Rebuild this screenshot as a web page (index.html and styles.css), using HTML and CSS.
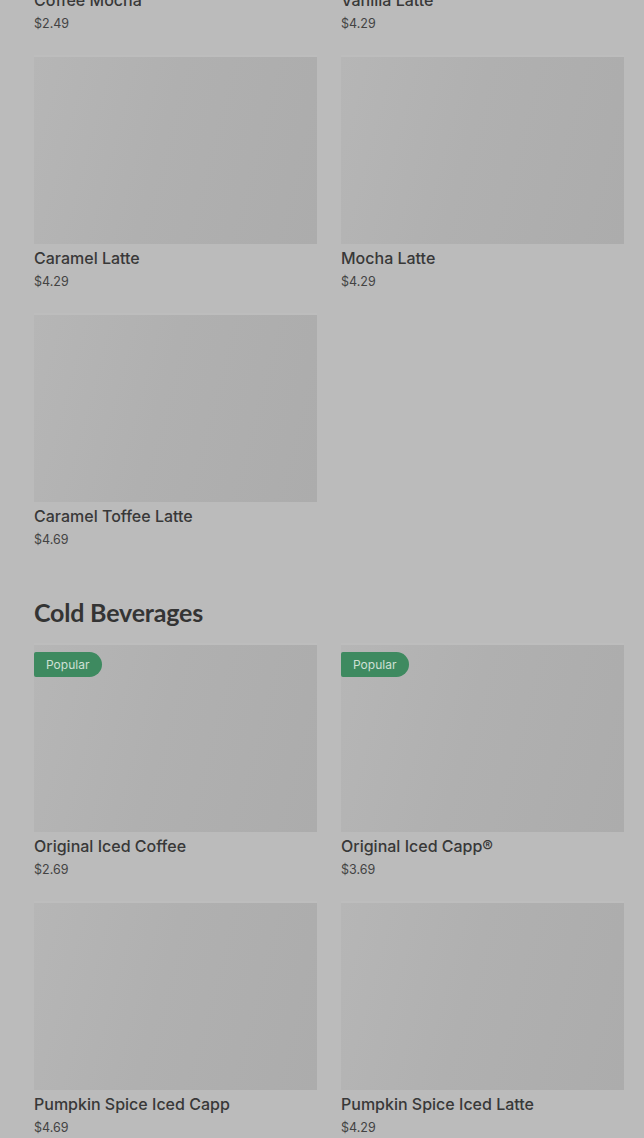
FILE: index.html
```html
<!DOCTYPE html>
<html lang="en">
<head>
<meta charset="utf-8">
<title>Menu</title>
<link rel="stylesheet" href="styles.css">
</head>
<body>
<main class="menu">
  <section class="section section-hot">
    <div class="grid">
      <article class="card"><div class="thumb"></div><h3 class="name">Coffee Mocha</h3><p class="price">$2.49</p></article>
      <article class="card"><div class="thumb"></div><h3 class="name">Vanilla Latte</h3><p class="price">$4.29</p></article>
      <article class="card"><div class="thumb"></div><h3 class="name">Caramel Latte</h3><p class="price">$4.29</p></article>
      <article class="card"><div class="thumb"></div><h3 class="name">Mocha Latte</h3><p class="price">$4.29</p></article>
      <article class="card"><div class="thumb"></div><h3 class="name">Caramel Toffee Latte</h3><p class="price">$4.69</p></article>
    </div>
  </section>
  <section class="section">
    <h2 class="section-title">Cold Beverages</h2>
    <div class="grid">
      <article class="card"><div class="thumb"><span class="badge">Popular</span></div><h3 class="name">Original Iced Coffee</h3><p class="price">$2.69</p></article>
      <article class="card"><div class="thumb"><span class="badge">Popular</span></div><h3 class="name">Original Iced Capp®</h3><p class="price">$3.69</p></article>
      <article class="card"><div class="thumb"></div><h3 class="name">Pumpkin Spice Iced Capp</h3><p class="price">$4.69</p></article>
      <article class="card"><div class="thumb"></div><h3 class="name">Pumpkin Spice Iced Latte</h3><p class="price">$4.29</p></article>
    </div>
  </section>
</main>
</body>
</html>
```
FILE: styles.css
```css
html, body {
  margin: 0;
  padding: 0;
  background: #bbbbbb;
  height: 100%;
  overflow: hidden;
}
body {
  font-family: Inter, "Liberation Sans", sans-serif;
  color: #3a3a3a;
}
.menu {
  padding: 0 20px 0 34px;
  margin-top: -201px;
}
.grid {
  display: grid;
  grid-template-columns: 1fr 1fr;
  column-gap: 24px;
  row-gap: 24px;
}
.card {
  display: flex;
  flex-direction: column;
}
.thumb {
  position: relative;
  height: 187px;
  background: linear-gradient(105deg, #b6b6b6 0%, #b0b0b0 45%, #acacac 100%);
  box-shadow: 0 -2px 0 #bdbdbd;
}
.name {
  margin: 4px 0 0;
  font-size: 16px;
  line-height: 20px;
  font-weight: 500;
  color: #383838;
  white-space: nowrap;
}
.price {
  margin: 5px 0 0;
  font-size: 12.5px;
  line-height: 18px;
  font-weight: 400;
  color: #434343;
}
.section-title {
  margin: 47px 0 17px;
  font-family: Lato, "Open Sans", sans-serif;
  font-weight: 700;
  font-size: 25px;
  line-height: 32px;
  letter-spacing: -0.2px;
  color: #343434;
}
.badge {
  position: absolute;
  left: 0;
  top: 7px;
  height: 25px;
  line-height: 25px;
  padding: 0 13px 0 12px;
  background: #3e8a60;
  color: #cfe0d5;
  font-size: 12px;
  border-radius: 2px 13px 13px 2px;
}
```
